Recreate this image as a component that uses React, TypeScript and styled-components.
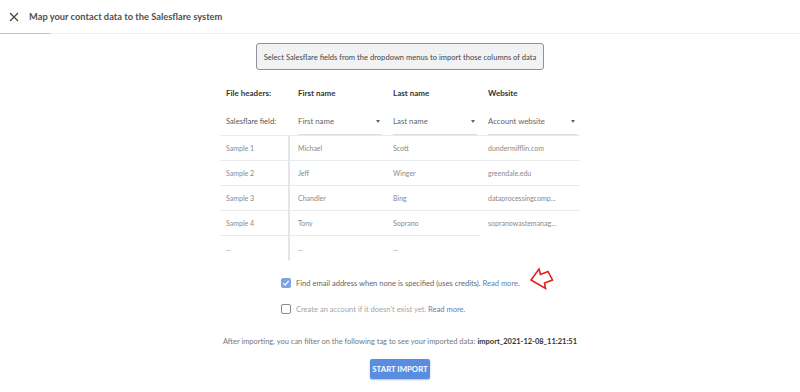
import React from 'react';
import styled, { createGlobalStyle } from 'styled-components';

const GlobalStyle = createGlobalStyle`
  html, body {
    margin: 0;
    padding: 0;
    background: #ffffff;
    font-family: Lato, "Open Sans", sans-serif;
  }
`;

const Page = styled.div`
  width: 800px;
  height: 392px;
  display: flex;
  flex-direction: column;
  overflow: hidden;
`;

const Header = styled.div`
  display: flex;
  align-items: center;
  height: 33px;
  padding-left: 9px;
  gap: 10px;
`;

const CloseButton = styled.button`
  border: none;
  background: none;
  padding: 0;
  width: 10px;
  height: 10px;
  display: flex;
  align-items: center;
  justify-content: center;
  cursor: pointer;
`;

const Title = styled.h1`
  margin: 0;
  font-size: 9.3px;
  font-weight: 700;
  color: #505050;
`;

const Divider = styled.div`
  height: 1px;
  background: #eceef0;
  display: flex;
`;

const ActiveTab = styled.div`
  width: 50px;
  background: #c4c4c4;
`;

const Content = styled.div`
  display: flex;
  flex-direction: column;
  align-items: center;
  padding-top: 9px;
`;

const InfoBox = styled.div`
  width: 286px;
  height: 25px;
  border: 1px solid #8f9399;
  border-radius: 3px;
  background: #f1f2f4;
  display: flex;
  align-items: center;
  justify-content: center;
  font-size: 7.6px;
  color: #444;
`;

const Table = styled.div`
  width: 360px;
  margin-top: 9px;
  display: grid;
  grid-template-columns: 70px 95px 95px 100px;
`;

const HeadCell = styled.div<{ $label?: boolean }>`
  height: 28px;
  display: flex;
  align-items: center;
  padding-left: ${(p) => (p.$label ? '6px' : '8px')};
  font-size: 8px;
  font-weight: 700;
  color: #333;
`;

const FieldLabel = styled.div`
  height: 28px;
  display: flex;
  align-items: center;
  padding-left: 6px;
  font-size: 7.6px;
  color: #555;
  border-bottom: 1px solid #e9eaec;
`;

const FieldCell = styled.div`
  height: 28px;
  display: flex;
  align-items: center;
  padding: 0 3px 0 8px;
  border-bottom: 1px solid #e9eaec;
`;

const Select = styled.div`
  flex: 1;
  height: 100%;
  display: flex;
  align-items: center;
  justify-content: space-between;
  border-bottom: 1px solid #dcdee0;
  box-sizing: border-box;
  padding-top: 1px;
  font-size: 7.8px;
  color: #666;
`;

const Caret = styled.span`
  width: 0;
  height: 0;
  border-left: 2.5px solid transparent;
  border-right: 2.5px solid transparent;
  border-top: 3px solid #666;
  margin-right: 2px;
`;

type CellProps = { $label?: boolean; $line?: boolean; $divider?: boolean };

const Cell = styled.div<CellProps>`
  height: 24px;
  display: flex;
  align-items: center;
  padding-left: ${(p) => (p.$label ? '6px' : '8px')};
  font-size: 7px;
  color: #8a8a8a;
  border-bottom: ${(p) => (p.$line ? '1px solid #e9eaec' : '1px solid transparent')};
  border-right: ${(p) => (p.$divider ? '2px solid #e4e5e7' : 'none')};
  white-space: nowrap;
`;

const Options = styled.div`
  width: 360px;
  box-sizing: border-box;
  padding-left: 61px;
  display: flex;
  flex-direction: column;
  align-items: flex-start;
  gap: 14px;
  margin-top: 16px;
`;

const OptionRow = styled.label<{ $disabled?: boolean }>`
  display: flex;
  align-items: center;
  gap: 5px;
  font-size: 7.55px;
  color: ${(p) => (p.$disabled ? '#a5a5a5' : '#666')};
  height: 12px;
  white-space: nowrap;
`;

const Box = styled.span<{ $checked?: boolean }>`
  width: 10px;
  height: 10px;
  flex-shrink: 0;
  box-sizing: border-box;
  border-radius: 2px;
  border: ${(p) => (p.$checked ? 'none' : '1.3px solid #8a8a8a')};
  background: ${(p) => (p.$checked ? '#7ea3e3' : '#fff')};
  display: flex;
  align-items: center;
  justify-content: center;
`;

const Link = styled.a`
  color: #5b7fb8;
  text-decoration: none;
`;

const Arrow = styled.svg`
  flex-shrink: 0;
  margin-left: 4px;
  margin-top: -9px;
`;

const TagNote = styled.p`
  margin: 22px 0 0;
  font-size: 7.5px;
  color: #777;
  strong {
    color: #333;
    font-weight: 700;
  }
`;

const ImportButton = styled.button`
  margin-top: 13px;
  width: 60px;
  height: 20px;
  border: none;
  border-radius: 2px;
  background: #5a8ddf;
  color: #fff;
  font-family: inherit;
  font-size: 7.8px;
  font-weight: 700;
  box-shadow: 0 1px 2px rgba(0, 0, 0, 0.25);
  padding: 0;
`;

const samples = [
  ['Sample 1', 'Michael', 'Scott', 'dundermifflin.com'],
  ['Sample 2', 'Jeff', 'Winger', 'greendale.edu'],
  ['Sample 3', 'Chandler', 'Bing', 'dataprocessingcomp...'],
  ['Sample 4', 'Tony', 'Soprano', 'sopranowastemanag...'],
  ['...', '...', '...', ''],
];

export default function App() {
  return (
    <Page>
      <GlobalStyle />
      <Header>
        <CloseButton>
          <svg width="10" height="10" viewBox="0 0 10 10">
            <path d="M1 1 L9 9 M9 1 L1 9" stroke="#444" strokeWidth="1.2" />
          </svg>
        </CloseButton>
        <Title>Map your contact data to the Salesflare system</Title>
      </Header>
      <Divider>
        <ActiveTab />
      </Divider>
      <Content>
        <InfoBox>Select Salesflare fields from the dropdown menus to import those columns of data</InfoBox>
        <Table>
          <HeadCell $label>File headers:</HeadCell>
          <HeadCell>First name</HeadCell>
          <HeadCell>Last name</HeadCell>
          <HeadCell>Website</HeadCell>
          <FieldLabel>Salesflare field:</FieldLabel>
          {['First name', 'Last name', 'Account website'].map((f) => (
            <FieldCell key={f}>
              <Select>
                {f}
                <Caret />
              </Select>
            </FieldCell>
          ))}
          {samples.map((row, i) =>
            row.map((v, j) => (
              <Cell
                key={`${i}-${j}`}
                $label={j === 0}
                $divider={j === 0}
                $line={i < 3 || (i === 3 && j < 3)}
              >
                {v}
              </Cell>
            ))
          )}
        </Table>
        <Options>
          <OptionRow>
            <Box $checked>
              <svg width="8" height="8" viewBox="0 0 8 8">
                <path d="M1.3 4.2 L3.2 6 L6.8 1.8" stroke="#fff" strokeWidth="1.2" fill="none" />
              </svg>
            </Box>
            <span>
              Find email address when none is specified (uses credits). <Link>Read more.</Link>
            </span>
            <Arrow width="27" height="25" viewBox="0 0 27 25">
              <path
                d="M2 14 L10 3 L11.5 8.5 L19 5.5 L23.5 14 L15.5 17 L16.5 22.5 Z"
                fill="none"
                stroke="#e02020"
                strokeWidth="1.6"
                strokeLinejoin="miter"
              />
            </Arrow>
          </OptionRow>
          <OptionRow $disabled>
            <Box />
            <span>
              Create an account if it doesn't exist yet. <Link>Read more.</Link>
            </span>
          </OptionRow>
        </Options>
        <TagNote>
          After importing, you can filter on the following tag to see your imported data:{' '}
          <strong>import_2021-12-08_11:21:51</strong>
        </TagNote>
        <ImportButton>START IMPORT</ImportButton>
      </Content>
    </Page>
  );
}
